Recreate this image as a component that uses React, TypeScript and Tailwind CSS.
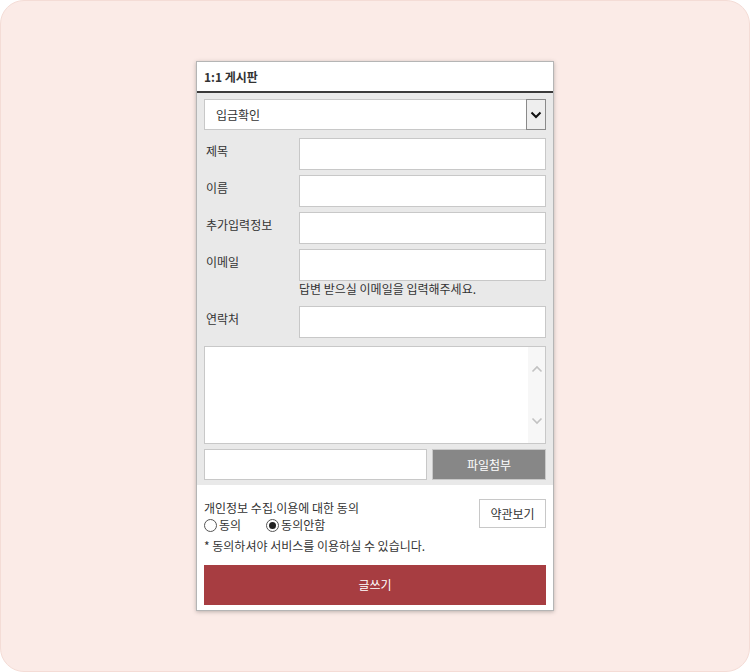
import React from "react";

const font = { fontFamily: '"Noto Sans CJK KR", "Noto Sans", sans-serif' };

function Row({ label, children }: { label: string; children: React.ReactNode }) {
  return (
    <div className="flex items-start">
      <div className="w-[95px] shrink-0 pl-[2px] pt-[5px] text-[12px] leading-[16px] text-[#333]">{label}</div>
      <div className="flex-1">{children}</div>
    </div>
  );
}

function Input() {
  return <div className="h-[32px] border border-[#c8c8c8] bg-white" />;
}

export default function App() {
  return (
    <div className="w-[750px] h-[672px] bg-white" style={font}>
      <div className="w-full h-full rounded-[24px] border border-[#f4dcd6] bg-[#fbebe7] pt-[60px]">
        <div className="mx-auto w-[358px] bg-white border border-[#b5b5b5] shadow-[0_1px_4px_rgba(0,0,0,0.25)]">
          <div className="h-[31px] flex items-center px-[7px] border-b-2 border-[#3a3a3a] text-[12px] font-bold text-[#333]">
            1:1 게시판
          </div>
          <div className="bg-[#e9e9e9] px-[7px] pt-[6px] pb-[5px]">
            <div className="h-[31px] flex border border-[#c8c8c8] bg-white">
              <div className="flex-1 flex items-center pl-[11px] text-[12px] text-[#333]">입금확인</div>
              <div className="w-[20px] flex items-center justify-center bg-[#eeeeee] border border-[#8a8a8a] -m-px">
                <svg width="12" height="8" viewBox="0 0 12 8">
                  <path d="M1.5 1.5 L6 6 L10.5 1.5" fill="none" stroke="#111" strokeWidth="2" />
                </svg>
              </div>
            </div>
            <div className="mt-[8px] flex flex-col gap-[5px]">
              <Row label="제목"><Input /></Row>
              <Row label="이름"><Input /></Row>
              <Row label="추가입력정보"><Input /></Row>
              <Row label="이메일">
                <Input />
                <div className="text-[12px] leading-[16px] text-[#333]">답변 받으실 이메일을 입력해주세요.</div>
              </Row>
              <div className="mt-[4px]">
                <Row label="연락처"><Input /></Row>
              </div>
            </div>
            <div className="mt-[8px] h-[98px] flex border border-[#c8c8c8] bg-white">
              <div className="flex-1" />
              <div className="w-[17px] bg-[#f7f7f7] flex flex-col items-center justify-between py-[18px]">
                <svg width="12" height="8" viewBox="0 0 12 8">
                  <path d="M1.5 6.5 L6 2 L10.5 6.5" fill="none" stroke="#c2c2c2" strokeWidth="1.6" />
                </svg>
                <svg width="12" height="8" viewBox="0 0 12 8">
                  <path d="M1.5 1.5 L6 6 L10.5 1.5" fill="none" stroke="#c2c2c2" strokeWidth="1.6" />
                </svg>
              </div>
            </div>
            <div className="mt-[5px] flex gap-[5px]">
              <div className="w-[223px] h-[31px] border border-[#c8c8c8] bg-white" />
              <div className="flex-1 h-[31px] bg-[#878787] border border-[#c8c8c8] flex items-center justify-center text-[12px] text-white">
                파일첨부
              </div>
            </div>
          </div>
          <div className="px-[7px] pt-[15px] pb-[5px]">
            <div className="flex justify-between">
              <div>
                <div className="text-[12px] leading-[16px] text-[#333]">개인정보 수집.이용에 대한 동의</div>
                <div className="flex items-center text-[12px] leading-[16px] text-[#333] mt-[1px]">
                  <span className="w-[13px] h-[13px] rounded-full border border-[#555] bg-white inline-block mr-[2px]" />
                  동의
                  <span className="ml-[25px] w-[13px] h-[13px] rounded-full border border-[#555] bg-white inline-flex items-center justify-center mr-[2px]">
                    <span className="w-[7px] h-[7px] rounded-full bg-[#222]" />
                  </span>
                  동의안함
                </div>
              </div>
              <div className="-mt-[1px] h-[29px] w-[67px] border border-[#c8c8c8] flex items-center justify-center text-[12px] text-[#333]">
                약관보기
              </div>
            </div>
            <div className="mt-[5px] text-[12px] leading-[16px] text-[#333]">* 동의하셔야 서비스를 이용하실 수 있습니다.</div>
            <div className="mt-[11px] h-[40px] bg-[#a73d41] flex items-center justify-center text-[12px] text-white">
              글쓰기
            </div>
          </div>
        </div>
      </div>
    </div>
  );
}
